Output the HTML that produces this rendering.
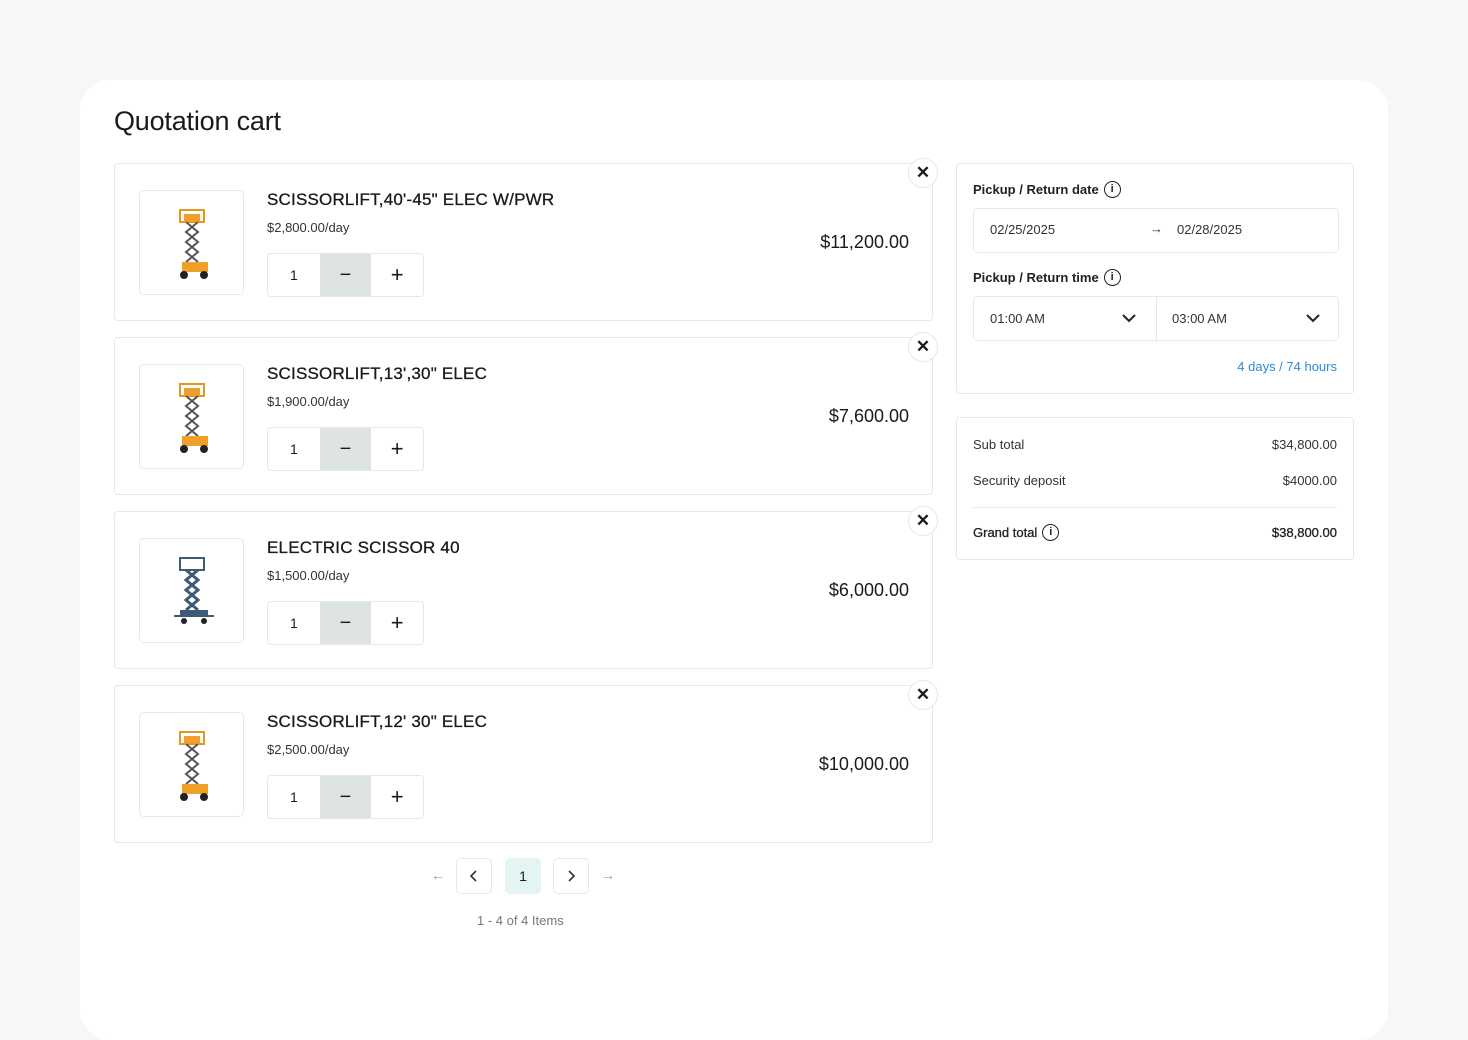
<!DOCTYPE html>
<html><head><meta charset="utf-8"><style>
*{box-sizing:border-box;margin:0;padding:0}
body{width:1468px;height:1014px;background:#f6f7f7;font-family:"Liberation Sans",sans-serif;color:#1a1a1a;position:relative;overflow:hidden}
.card{position:absolute;left:80px;top:80px;width:1308px;height:960px;background:#fff;border-radius:30px}
h1{position:absolute;left:114px;top:106px;font-size:27px;font-weight:500;letter-spacing:-.2px}
.item{position:absolute;left:114px;width:819px;height:158px;border:1px solid #e6e8e8;border-radius:4px;background:#fff}
.img{position:absolute;left:24px;top:26px;width:105px;height:105px;border:1px solid #e6e8e8;border-radius:5px}
.img svg{position:absolute;left:26px;top:14px}
.t{position:absolute;left:152px;top:26px;font-size:17px;letter-spacing:.2px;-webkit-text-stroke:.3px #1a1a1a}
.p{position:absolute;left:152px;top:56px;font-size:13px;color:#333}
.q{position:absolute;left:152px;top:89px;width:157px;height:44px;border:1px solid #e6e8e8;border-radius:4px;display:flex;font-size:14px;overflow:hidden}
.q div{width:52px;display:flex;align-items:center;justify-content:center}
.q .m{background:#dee3e3;font-size:20px}
.q .pl{font-size:22px;font-weight:300}
.tot{position:absolute;right:23px;top:68px;font-size:18px}
.x{position:absolute;right:-6px;top:-6px;width:30px;height:30px;border-radius:50%;background:#fff;border:1px solid #e6e8e8;display:flex;align-items:center;justify-content:center;font-size:17px;font-weight:bold}
.panel{position:absolute;left:956px;width:398px;border:1px solid #e6e8e8;border-radius:4px;background:#fff}
.lbl{position:absolute;left:16px;font-size:13px;font-weight:600;color:#222;display:flex;align-items:center}
.info{display:inline-block;width:17px;height:17px;border:1.5px solid #222;border-radius:50%;font-size:11px;text-align:center;line-height:14px;margin-left:5px;font-weight:700}
.inp{position:absolute;left:16px;width:366px;height:45px;border:1px solid #e6e8e8;border-radius:5px;font-size:13px;color:#333}
.row{position:absolute;left:16px;right:16px;font-size:13px;color:#333;display:flex;justify-content:space-between;align-items:center}
.pg{position:absolute;top:858px;width:36px;height:36px;border:1px solid #e6e8e8;border-radius:5px;display:flex;align-items:center;justify-content:center;font-size:14px}
</style></head><body>
<div class="card"></div>
<h1>Quotation cart</h1>

<svg width="0" height="0" style="position:absolute"><defs>
<g id="lift"><rect x="14" y="5" width="24" height="12" fill="none" stroke="#e8951c" stroke-width="2"/><rect x="18" y="9" width="16" height="8" fill="#f0a02a"/><path d="M20 17 L32 27 L20 37 L32 47 L20 57 M32 17 L20 27 L32 37 L20 47 L32 57" stroke="#555" stroke-width="2" fill="none"/><rect x="16" y="57" width="26" height="10" fill="#f0a02a"/><circle cx="18" cy="70" r="4" fill="#222"/><circle cx="38" cy="70" r="4" fill="#222"/></g>
<g id="lift2"><rect x="14" y="5" width="24" height="12" fill="none" stroke="#3d5a78" stroke-width="2"/><path d="M20 17 L32 27 L20 37 L32 47 L20 57 M32 17 L20 27 L32 37 L20 47 L32 57" stroke="#3d5a78" stroke-width="3" fill="none"/><rect x="14" y="57" width="28" height="6" fill="#3d5a78"/><path d="M8 63h40" stroke="#3d5a78" stroke-width="2"/><circle cx="18" cy="68" r="3" fill="#222"/><circle cx="38" cy="68" r="3" fill="#222"/></g>
</defs></svg>

<div class="item" style="top:163px"><div class="img"><svg width="52" height="76"><use href="#lift"/></svg></div><div class="t">SCISSORLIFT,40'-45" ELEC W/PWR</div><div class="p">$2,800.00/day</div><div class="q"><div>1</div><div class="m">−</div><div class="pl">+</div></div><div class="tot">$11,200.00</div><div class="x">✕</div></div>
<div class="item" style="top:337px"><div class="img"><svg width="52" height="76"><use href="#lift"/></svg></div><div class="t">SCISSORLIFT,13',30" ELEC</div><div class="p">$1,900.00/day</div><div class="q"><div>1</div><div class="m">−</div><div class="pl">+</div></div><div class="tot">$7,600.00</div><div class="x">✕</div></div>
<div class="item" style="top:511px"><div class="img"><svg width="52" height="76"><use href="#lift2"/></svg></div><div class="t">ELECTRIC SCISSOR 40</div><div class="p">$1,500.00/day</div><div class="q"><div>1</div><div class="m">−</div><div class="pl">+</div></div><div class="tot">$6,000.00</div><div class="x">✕</div></div>
<div class="item" style="top:685px"><div class="img"><svg width="52" height="76"><use href="#lift"/></svg></div><div class="t">SCISSORLIFT,12' 30" ELEC</div><div class="p">$2,500.00/day</div><div class="q"><div>1</div><div class="m">−</div><div class="pl">+</div></div><div class="tot">$10,000.00</div><div class="x">✕</div></div>

<div style="position:absolute;left:431px;top:867px;color:#999;font-size:14px">←</div>
<div class="pg" style="left:456px"><svg width="10" height="12"><path d="M7 1L2 6l5 5" stroke="#333" stroke-width="1.6" fill="none"/></svg></div>
<div class="pg" style="left:505px;background:#e3f4f3;border-color:#e3f4f3">1</div>
<div class="pg" style="left:553px"><svg width="10" height="12"><path d="M3 1l5 5-5 5" stroke="#333" stroke-width="1.6" fill="none"/></svg></div>
<div style="position:absolute;left:601px;top:867px;color:#999;font-size:14px">→</div>
<div style="position:absolute;left:477px;top:913px;color:#777;font-size:13px">1 - 4 of 4 Items</div>

<div class="panel" style="top:163px;height:231px">
<div class="lbl" style="top:17px">Pickup / Return date<span class="info">i</span></div>
<div class="inp" style="top:44px"><span style="position:absolute;left:16px;top:13px">02/25/2025</span><span style="position:absolute;left:176px;top:12px">→</span><span style="position:absolute;left:203px;top:13px">02/28/2025</span></div>
<div class="lbl" style="top:105px">Pickup / Return time<span class="info">i</span></div>
<div class="inp" style="top:132px"><span style="position:absolute;left:16px;top:14px">01:00 AM</span><svg style="position:absolute;left:148px;top:16px" width="14" height="10"><path d="M1 2l6 6 6-6" stroke="#222" stroke-width="2" fill="none"/></svg><div style="position:absolute;left:182px;top:0;bottom:0;border-left:1px solid #e6e8e8"></div><span style="position:absolute;left:198px;top:14px">03:00 AM</span><svg style="position:absolute;left:332px;top:16px" width="14" height="10"><path d="M1 2l6 6 6-6" stroke="#222" stroke-width="2" fill="none"/></svg></div>
<div style="position:absolute;right:16px;top:195px;font-size:13px;color:#2a8ad8">4 days / 74 hours</div>
</div>
<div class="panel" style="top:417px;height:143px">
<div class="row" style="top:19px"><span>Sub total</span><span>$34,800.00</span></div>
<div class="row" style="top:55px"><span>Security deposit</span><span>$4000.00</span></div>
<div style="position:absolute;left:16px;right:16px;top:89px;border-top:1px solid #e6e8e8"></div>
<div class="row" style="top:106px;font-weight:500;color:#222;-webkit-text-stroke:.3px #222"><span style="display:flex;align-items:center">Grand total<span class="info" style="-webkit-text-stroke:0">i</span></span><span>$38,800.00</span></div>
</div>
</body></html>
